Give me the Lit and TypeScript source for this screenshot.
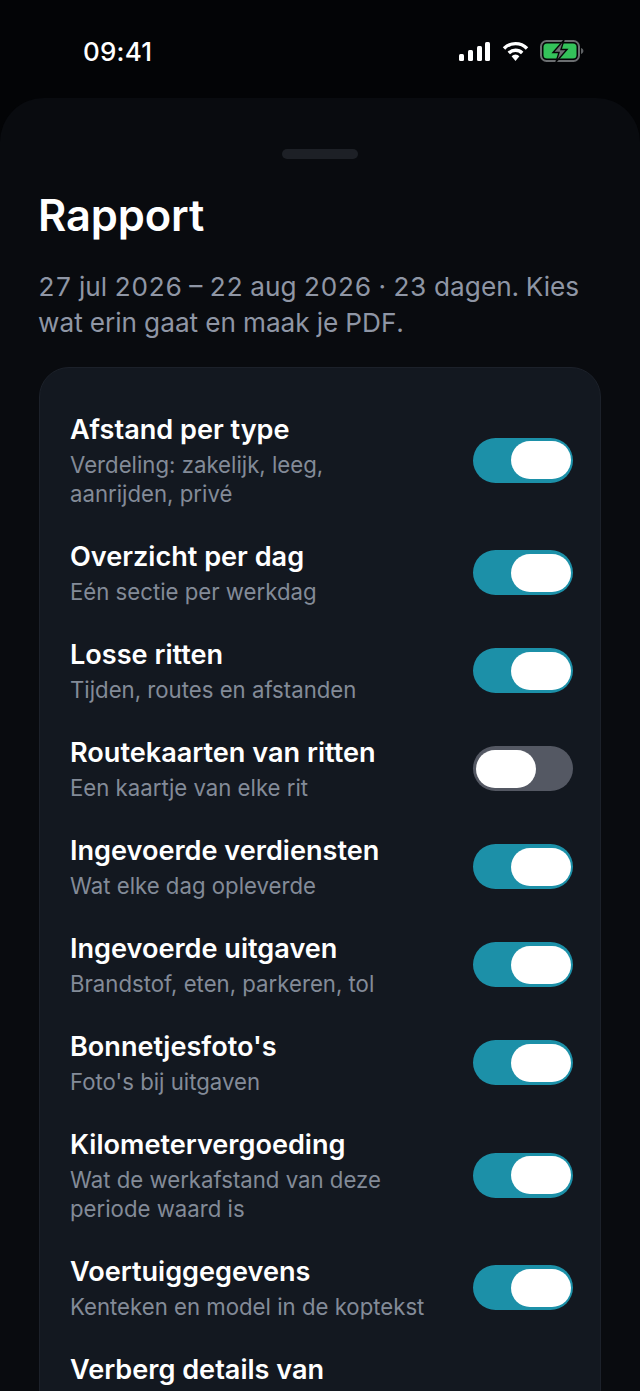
import { LitElement, html, css } from 'lit';
import { customElement } from 'lit/decorators.js';

const rows = [
  { title: 'Afstand per type', sub: 'Verdeling: zakelijk, leeg,<br>aanrijden, privé', on: true },
  { title: 'Overzicht per dag', sub: 'Eén sectie per werkdag', on: true },
  { title: 'Losse ritten', sub: 'Tijden, routes en afstanden', on: true },
  { title: 'Routekaarten van ritten', sub: 'Een kaartje van elke rit', on: false },
  { title: 'Ingevoerde verdiensten', sub: 'Wat elke dag opleverde', on: true },
  { title: 'Ingevoerde uitgaven', sub: 'Brandstof, eten, parkeren, tol', on: true },
  { title: "Bonnetjesfoto's", sub: "Foto's bij uitgaven", on: true },
  { title: 'Kilometervergoeding', sub: 'Wat de werkafstand van deze<br>periode waard is', on: true },
  { title: 'Voertuiggegevens', sub: 'Kenteken en model in de koptekst', on: true },
  { title: 'Verberg details van', sub: '', on: true },
];

@customElement('app-root')
export class AppRoot extends LitElement {
  static styles = css`
    :host {
      display: block;
      width: 640px;
      height: 1391px;
      overflow: hidden;
      background: #030406;
      font-family: Inter, 'Noto Sans', sans-serif;
      color: #fff;
    }
    .status {
      height: 98px;
      box-sizing: border-box;
      padding: 35px 56px 0 83px;
      display: flex;
      justify-content: space-between;
      align-items: flex-start;
    }
    .time {
      font-size: 26px;
      line-height: 34px;
      font-weight: 500;
      letter-spacing: 0.2px;
    }
    .icons {
      display: flex;
      align-items: center;
      gap: 11px;
      padding-top: 5px;
    }
    .icons svg {
      display: block;
    }
    .sheet {
      background: #090b0f;
      border-radius: 44px 44px 0 0;
      padding: 51px 39px 0;
      height: 1293px;
      box-sizing: border-box;
    }
    .handle {
      width: 76px;
      height: 10px;
      border-radius: 5px;
      background: #1d2026;
      margin: 0 auto;
    }
    h1 {
      margin: 30px 0 0 -1px;
      font-size: 43.4px;
      line-height: 52px;
      font-weight: 600;
      letter-spacing: -0.1px;
    }
    .desc {
      margin: 28px 0 0 -1px;
      font-size: 26.2px;
      line-height: 36px;
      color: #8f96a5;
      font-variant-numeric: tabular-nums;
    }
    .card {
      margin-top: 26px;
      background: #131820;
      border: 1px solid #1c212a;
      border-radius: 30px;
      padding: 45px 27px 0 30px;
    }
    .row {
      display: flex;
      justify-content: space-between;
      align-items: center;
      padding-bottom: 32px;
    }
    .title {
      font-size: 27.1px;
      line-height: 34px;
      font-weight: 600;
    }
    .sub {
      font-size: 22.2px;
      line-height: 29px;
      color: #838b98;
      margin-top: 3px;
    }
    .toggle {
      flex: none;
      width: 100px;
      height: 45px;
      border-radius: 23px;
      background: #1c90a8;
      display: flex;
      align-items: center;
      justify-content: flex-end;
      padding: 0 2px;
      margin-top: -1px;
      box-sizing: border-box;
    }
    .toggle.off {
      background: #545863;
      justify-content: flex-start;
      padding: 0 3px;
    }
    .thumb {
      width: 60px;
      height: 38px;
      border-radius: 19px;
      background: #fff;
    }
  `;

  render() {
    return html`
      <div class="status">
        <div class="time">09:41</div>
        <div class="icons">
          <svg width="32" height="20" viewBox="0 0 32 20" fill="#fff">
            <rect x="0" y="13" width="5" height="7" rx="1.5"></rect>
            <rect x="9" y="9" width="5" height="11" rx="1.5"></rect>
            <rect x="18" y="5" width="5" height="15" rx="1.5"></rect>
            <rect x="26" y="1" width="5" height="19" rx="1.5"></rect>
          </svg>
          <svg width="27" height="20" viewBox="0 0 27 20">
            <path d="M2 7.5a16 16 0 0 1 23 0" fill="none" stroke="#fff" stroke-width="3.4"></path>
            <path d="M6.8 12a9.4 9.4 0 0 1 13.4 0" fill="none" stroke="#fff" stroke-width="3.4"></path>
            <path d="M9.6 15.2a5.6 5.6 0 0 1 7.8 0L13.5 20z" fill="#fff"></path>
          </svg>
          <svg width="44" height="22" viewBox="0 0 44 22">
            <rect x="1" y="1" width="38" height="20" rx="5.5" fill="none" stroke="#6b6e70" stroke-width="2"></rect>
            <rect x="3.5" y="3.5" width="33" height="15" rx="3.5" fill="#34c25a"></rect>
            <path d="M41 8v6c1.5-.4 2.4-1.6 2.4-3s-.9-2.6-2.4-3z" fill="#5e6163"></path>
            <path d="M24 0 13 12.5h6L16 22l11-12.5h-6z" fill="#6e7073" stroke="#050607" stroke-width="1.4"></path>
          </svg>
        </div>
      </div>
      <div class="sheet">
        <div class="handle"></div>
        <h1>Rapport</h1>
        <p class="desc">27 jul 2026 – 22 aug 2026 · 23 dagen. Kies wat erin gaat en maak je PDF.</p>
        <div class="card">
          ${rows.map(
            (r) => html`
              <div class="row">
                <div>
                  <div class="title">${r.title}</div>
                  ${r.sub
                    ? html`<div class="sub">${r.sub.split('<br>').map((l, i) => (i ? html`<br />${l}` : l))}</div>`
                    : ''}
                </div>
                ${r.sub
                  ? html`<div class="toggle ${r.on ? '' : 'off'}"><div class="thumb"></div></div>`
                  : ''}
              </div>
            `,
          )}
        </div>
      </div>
    `;
  }
}
